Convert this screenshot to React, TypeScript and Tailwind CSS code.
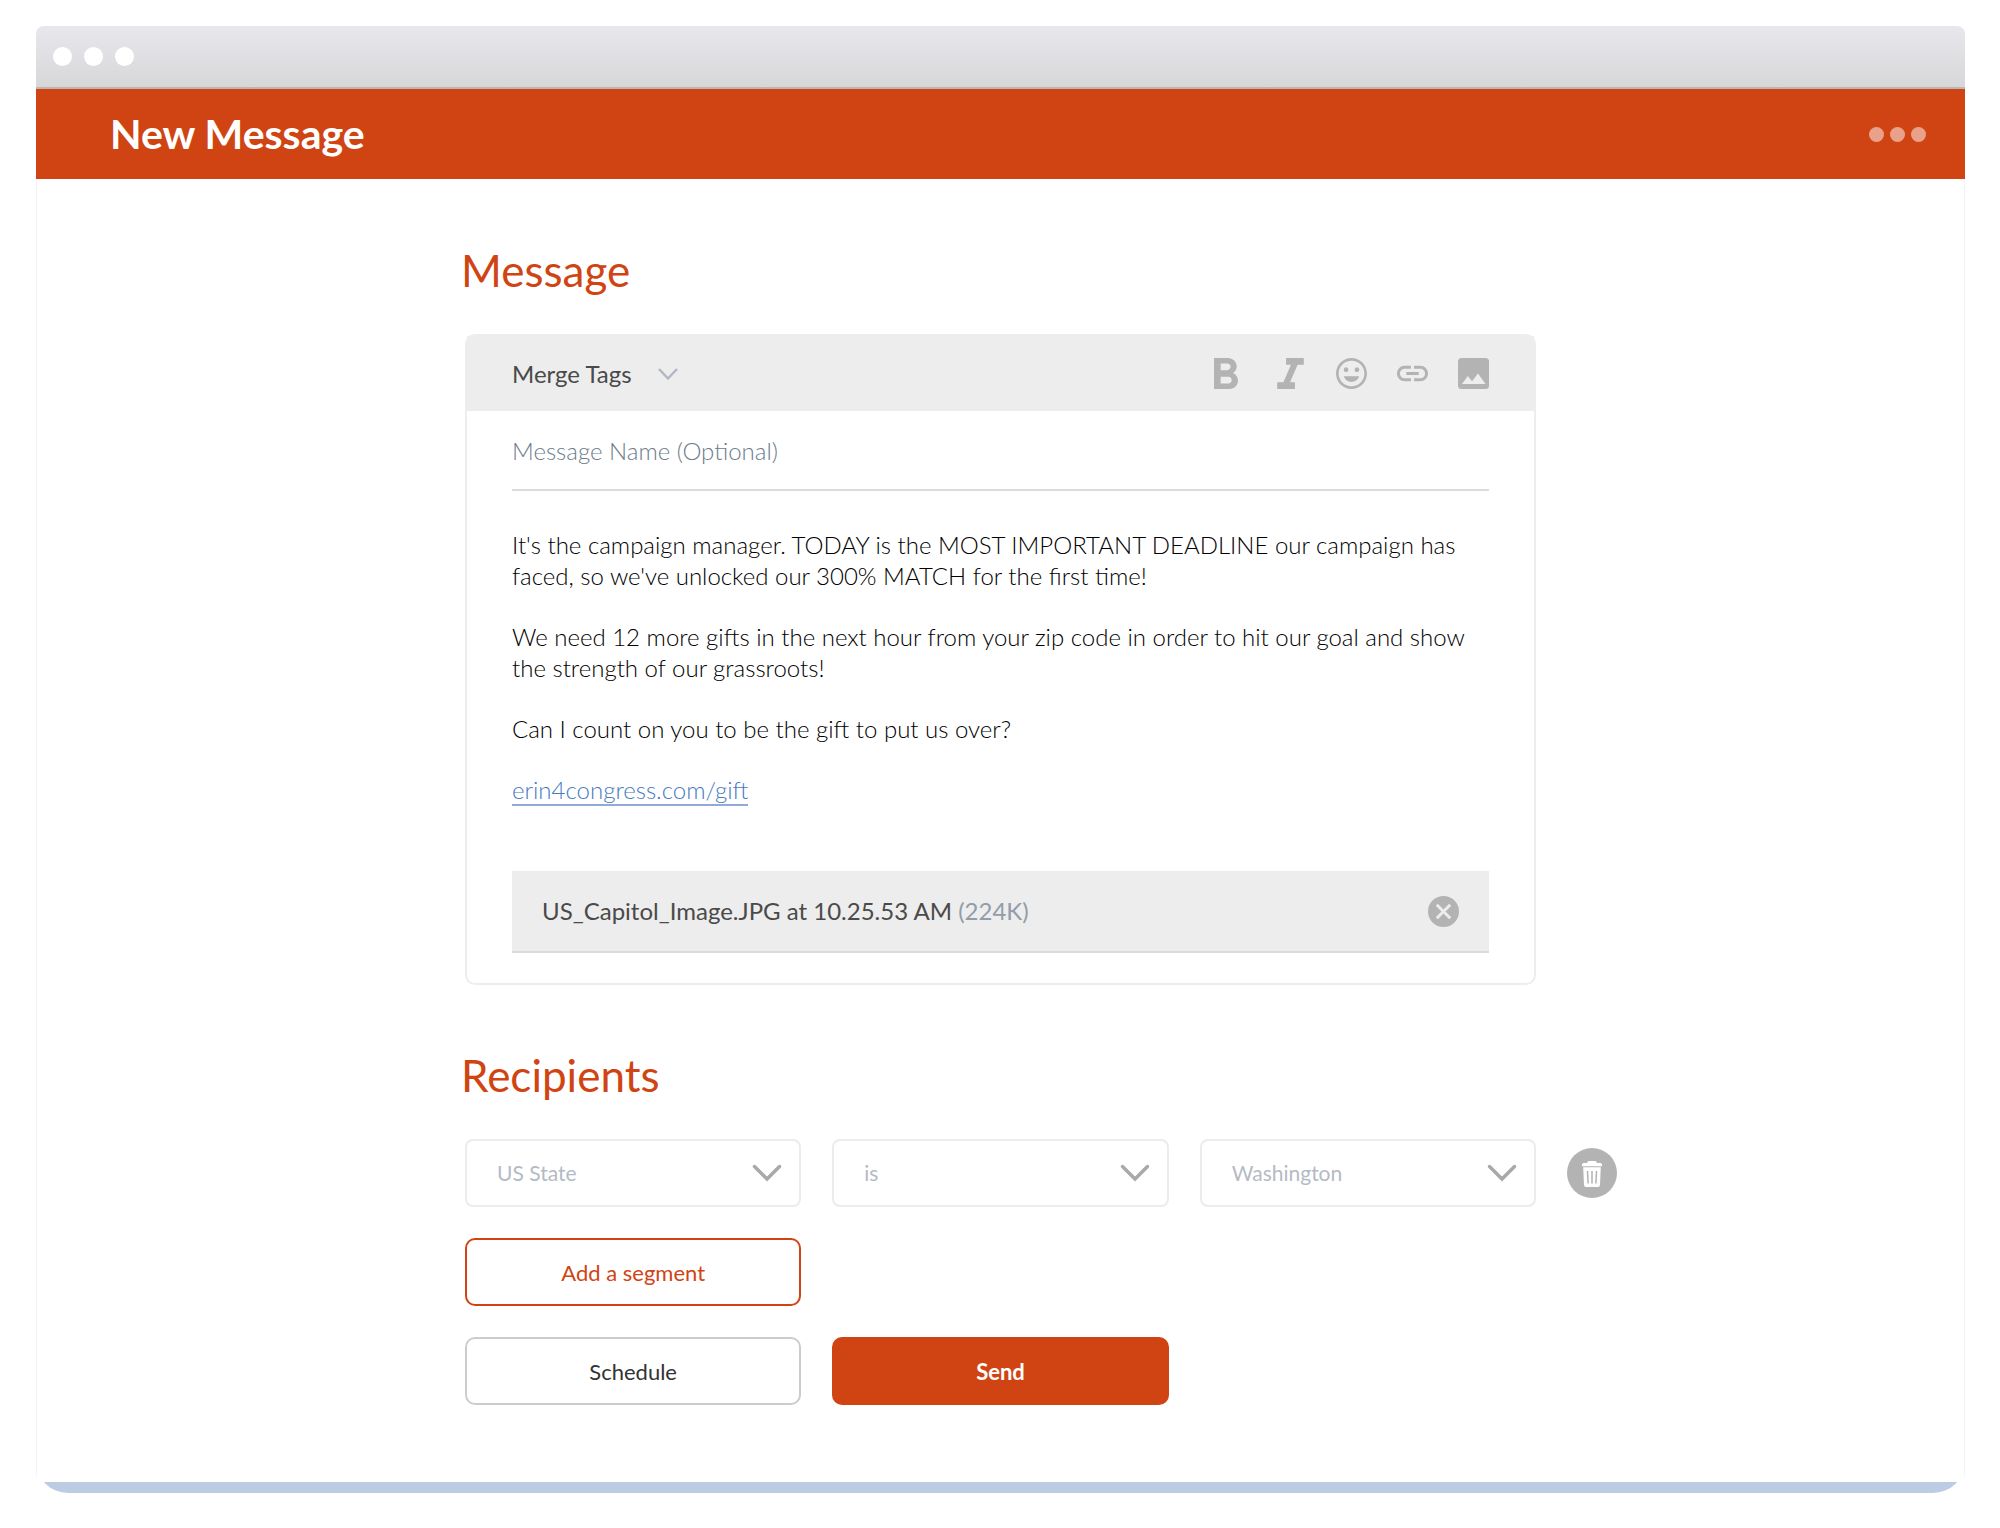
import type { ReactNode } from "react"

const filters = [
  { label: "Field", options: ["US State", "City", "Zip Code"] },
  { label: "Condition", options: ["is", "is not"] },
  { label: "Value", options: ["Washington", "Oregon", "California"] },
]

const tools = [
  {
    label: "Bold",
    viewBox: "7 4 14 14",
    path: "M15.6 10.79c.97-.67 1.65-1.77 1.65-2.79 0-2.26-1.75-4-4-4H7v14h7.04c2.09 0 3.79-1.7 3.79-3.79 0-1.52-.86-2.82-2.23-3.42zM10 6.5h3c.83 0 1.5.67 1.5 1.5s-.67 1.5-1.5 1.5h-3v-3zm3.5 9H10v-3h3.5c.83 0 1.5.67 1.5 1.5s-.67 1.5-1.5 1.5z",
  },
  {
    label: "Italic",
    viewBox: "5 4 14 14",
    path: "M10 4v3h2.21l-3.42 8H6v3h8v-3h-2.21l3.42-8H18V4z",
  },
  {
    label: "Insert emoji",
    viewBox: "2 2 20 20",
    path: "M11.99 2C6.47 2 2 6.48 2 12s4.47 10 9.99 10C17.52 22 22 17.52 22 12S17.52 2 11.99 2zM12 20.3a8.3 8.3 0 1 1 0-16.6 8.3 8.3 0 0 1 0 16.6zm3.5-9.3c.83 0 1.5-.67 1.5-1.5S16.33 8 15.5 8 14 8.67 14 9.5s.67 1.5 1.5 1.5zm-7 0c.83 0 1.5-.67 1.5-1.5S9.33 8 8.5 8 7 8.67 7 9.5 7.67 11 8.5 11zM7.1 13.8c.5 2.1 2.5 3.7 4.9 3.7s4.4-1.6 4.9-3.7z",
  },
  {
    label: "Insert link",
    viewBox: "2 2 20 20",
    path: "M3.9 12c0-1.71 1.39-3.1 3.1-3.1h4V7H7c-2.76 0-5 2.24-5 5s2.24 5 5 5h4v-1.9H7c-1.71 0-3.1-1.39-3.1-3.1zM8 13h8v-2H8v2zm9-6h-4v1.9h4c1.71 0 3.1 1.39 3.1 3.1s-1.39 3.1-3.1 3.1h-4V17h4c2.76 0 5-2.24 5-5s-2.24-5-5-5z",
  },
  {
    label: "Insert image",
    viewBox: "0 0 31 31",
    path: "M3.5 0h24A3.5 3.5 0 0 1 31 3.5v24a3.5 3.5 0 0 1-3.5 3.5h-24A3.5 3.5 0 0 1 0 27.5v-24A3.5 3.5 0 0 1 3.5 0zM4 26h23.5L20 15.5l-6 7.8-4.2-5.3z",
  },
]

function SectionTitle({ children }: { children: ReactNode }) {
  return <h2 className="-ml-1 mb-9 text-[44px] leading-[56px] text-[#d04413]">{children}</h2>
}

function Filter({ label, options }: { label: string; options: string[] }) {
  return (
    <div className="relative">
      <select
        aria-label={label}
        className="h-[68px] w-full appearance-none rounded-lg border-2 border-[#ececec] bg-white px-[30px] text-[21px] text-[#b4bac6]"
      >
        {options.map((option) => (
          <option key={option}>{option}</option>
        ))}
      </select>
      <svg
        className="pointer-events-none absolute top-1/2 right-[19px] h-[18px] w-[30px] -translate-y-1/2"
        viewBox="0 0 30 18"
        fill="none"
        stroke="#a9a9a9"
        strokeWidth="3.5"
        strokeLinecap="round"
      >
        <path d="M2.5 2.5L15 15L27.5 2.5" />
      </svg>
    </div>
  )
}

export default function App() {
  return (
    <div className="min-h-screen bg-white pt-[26px] pr-[35px] pb-[35px] pl-9 font-['Lato',sans-serif]">
      <div className="rounded-t-xl rounded-b-[32px] bg-[#bccce3] pb-[11px]">
        <div className="overflow-hidden rounded-lg bg-white">
          <div className="flex h-[63px] items-center gap-3 border-b-2 border-[#bdb6b7] bg-linear-to-b from-[#e8e7ec] to-[#d7d7d9] px-[17px]">
            <span className="size-[19px] rounded-full bg-white" />
            <span className="size-[19px] rounded-full bg-white" />
            <span className="size-[19px] rounded-full bg-white" />
          </div>

          <header className="flex h-[90px] items-center justify-between bg-[#d04413] pr-[39px] pl-[74px]">
            <h1 className="text-[41px] font-bold text-white">New Message</h1>
            <button aria-label="More options" className="flex gap-1.5">
              <span className="size-[15px] rounded-full bg-[#e9a189]" />
              <span className="size-[15px] rounded-full bg-[#e9a189]" />
              <span className="size-[15px] rounded-full bg-[#e9a189]" />
            </button>
          </header>

          <div className="border-x border-[#f1f3fb]">
            <main className="mx-auto max-w-[1071px] pt-[63px] pb-[77px]">
              <section>
                <SectionTitle>Message</SectionTitle>
                <div className="rounded-[10px] border-2 border-[#ededed]">
                  <div className="flex h-[75px] items-center justify-between bg-[#ededed] px-[45px]">
                    <button aria-haspopup="menu" className="flex items-center gap-[26px] text-[24px] text-[#4a4a4a]">
                      Merge Tags
                      <svg className="h-3 w-5" viewBox="0 0 20 12" fill="none" stroke="#b1b7c3" strokeWidth="2.4">
                        <path d="M1 1L10 10.5L19 1" />
                      </svg>
                    </button>
                    <div className="flex gap-[30px]">
                      {tools.map((tool) => (
                        <button key={tool.label} aria-label={tool.label}>
                          <svg className="size-[31px]" viewBox={tool.viewBox} fill="#b3b3b3" fillRule="evenodd">
                            <path d={tool.path} />
                          </svg>
                        </button>
                      ))}
                    </div>
                  </div>

                  <div className="px-[45px] pb-[30px]">
                    <input
                      type="text"
                      aria-label="Message name"
                      placeholder="Message Name (Optional)"
                      className="h-20 w-full border-b-2 border-[#dadbdc] text-[24px] font-light text-black outline-none placeholder:text-[#6d7c8b]"
                    />
                    <div
                      role="textbox"
                      aria-label="Message text"
                      contentEditable
                      suppressContentEditableWarning
                      spellCheck={false}
                      className="mt-[38px] flex flex-col gap-[30px] text-[24px] leading-[31px] font-light text-black outline-none"
                    >
                      <p>
                        It's the campaign manager. TODAY is the MOST IMPORTANT DEADLINE our campaign has faced, so
                        we've unlocked our 300% MATCH for the first time!
                      </p>
                      <p>
                        We need 12 more gifts in the next hour from your zip code in order to hit our goal and show
                        the strength of our grassroots!
                      </p>
                      <p>Can I count on you to be the gift to put us over?</p>
                      <p>
                        <a href="#gift" className="border-b-2 border-[#8fabd6] text-[#457abf]">
                          erin4congress.com/gift
                        </a>
                      </p>
                    </div>

                    <div className="mt-[66px] flex h-[82px] items-center justify-between border-b-2 border-[#dadbdc] bg-[#ededed] px-[30px]">
                      <p className="text-[24px] text-[#4a4a4a]">
                        US_Capitol_Image.JPG at 10.25.53 AM <span className="text-[#919da9]">(224K)</span>
                      </p>
                      <button aria-label="Remove attachment">
                        <svg className="size-[31px]" viewBox="0 0 31 31">
                          <circle cx="15.5" cy="15.5" r="15.5" fill="#b3b3b3" />
                          <path d="M8.8 8.8l13.4 13.4M22.2 8.8L8.8 22.2" stroke="#ededed" strokeWidth="3" />
                        </svg>
                      </button>
                    </div>
                  </div>
                </div>
              </section>

              <section className="mt-[62px]">
                <SectionTitle>Recipients</SectionTitle>
                <div className="-mr-[81px] flex items-center gap-[31px]">
                  <div className="grid flex-1 grid-cols-3 gap-[31px]">
                    {filters.map((filter) => (
                      <Filter key={filter.label} {...filter} />
                    ))}
                  </div>
                  <button aria-label="Delete segment">
                    <svg className="size-[50px]" viewBox="0 0 50 50">
                      <circle cx="25" cy="25" r="25" fill="#b3b3b3" />
                      <path
                        d="M15 16.5Q15 15 16.5 15H20Q20.5 13 22 13H28Q29.5 13 30 15H33.5Q35 15 35 16.5V18.2H15zM16.2 19.2H33.8L33 37Q32.9 39 31 39H19Q17.1 39 17 37z"
                        fill="#fff"
                      />
                      <path d="M20.5 23l.6 12.5M25 23v12.5M29.5 23l-.6 12.5" stroke="#b3b3b3" strokeWidth="1.5" />
                    </svg>
                  </button>
                </div>

                <div className="mt-[31px] grid grid-cols-3 gap-[31px] text-[22px]">
                  <button className="col-start-1 h-[68px] rounded-[10px] border-2 border-[#d04413] text-[#d04413]">
                    Add a segment
                  </button>
                  <button className="col-start-1 h-[68px] rounded-[10px] border-2 border-[#cccccc] text-[#333333]">
                    Schedule
                  </button>
                  <button className="h-[68px] rounded-[10px] bg-[#d04413] font-bold text-white">Send</button>
                </div>
              </section>
            </main>
          </div>
        </div>
      </div>
    </div>
  )
}
